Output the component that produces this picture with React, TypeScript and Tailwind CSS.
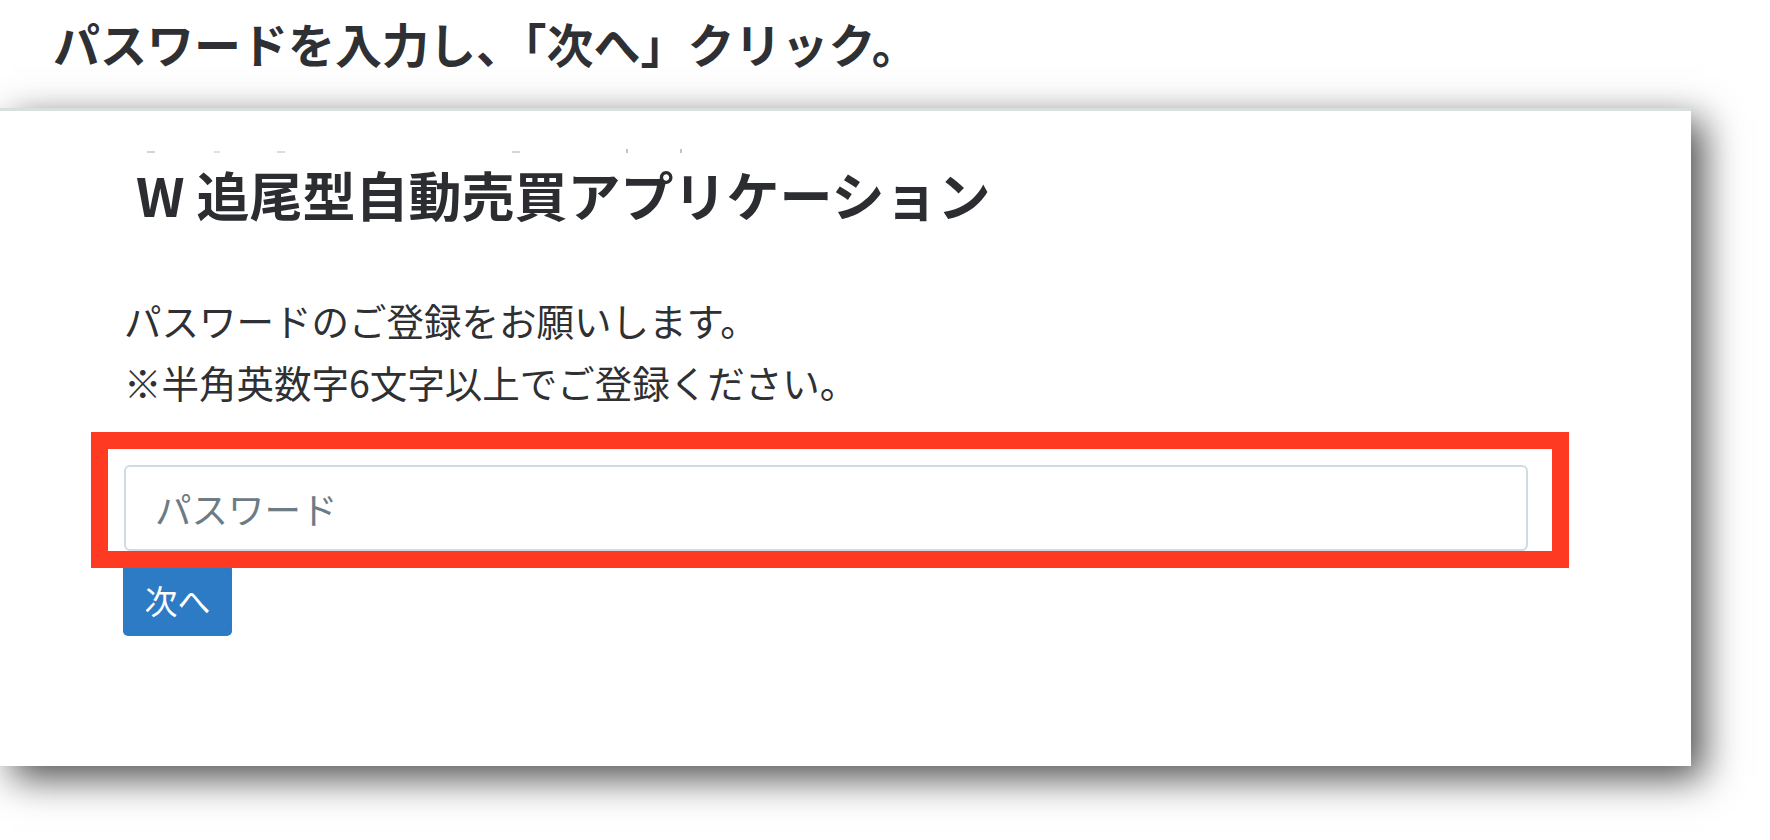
import React from "react";

export default function App() {
  return (
    <div className="w-[1770px] h-[840px] bg-white overflow-hidden font-['Noto_Sans_CJK_JP','Noto_Sans',sans-serif] text-[#2e3034]">
      <div className="h-[108px] pl-[53px] pt-[19px]">
        <h1 className="text-[47px] leading-[47px] font-bold">
          パスワードを入力し、「次へ」クリック。
        </h1>
      </div>
      <div className="relative w-[1691px] h-[658px] bg-white border-t-[3px] border-[#d8dfde] shadow-[12px_12px_36px_rgba(0,0,0,0.7)]">
        <div className="absolute left-[147px] top-[40px] w-[8px] h-[2px] bg-[#d4d4d4]" />
        <div className="absolute left-[214px] top-[40px] w-[6px] h-[2px] bg-[#e0e0e0]" />
        <div className="absolute left-[277px] top-[40px] w-[8px] h-[2px] bg-[#dcdcdc]" />
        <div className="absolute left-[512px] top-[40px] w-[8px] h-[2px] bg-[#d4d4d4]" />
        <div className="absolute left-[626px] top-[38px] w-[2px] h-[4px] bg-[#c4c4c4]" />
        <div className="absolute left-[680px] top-[38px] w-[2px] h-[4px] bg-[#c4c4c4]" />

        <div className="flex flex-col items-start pt-[57px] pl-[124px]">
          <h2 className="pl-[12px] text-[53px] leading-[53px] font-bold text-[#2b2d31]">
            W 追尾型自動売買アプリケーション
          </h2>
          <div className="mt-[68px] text-[37.5px] leading-[62px] text-[#2e3033]">
            <p>パスワードのご登録をお願いします。</p>
            <p>※半角英数字6文字以上でご登録ください。</p>
          </div>
          <input
            type="password"
            placeholder="パスワード"
            className="mt-[52px] block w-[1404px] h-[86px] border-2 border-[#cfdbe2] rounded-[6px] pl-[29px] text-[36.5px] placeholder:text-[#6c7b84] outline-none bg-white"
          />
          <button className="mt-[13px] -ml-[1px] w-[109px] h-[72px] bg-[#2d7bc4] rounded-[5px] text-white text-[33px] leading-[33px] flex items-center justify-center">
            次へ
          </button>
        </div>

        <div className="absolute left-[91px] top-[321px] w-[1478px] h-[136px] border-[17px] border-[#fe3a22]" />
      </div>
    </div>
  );
}
